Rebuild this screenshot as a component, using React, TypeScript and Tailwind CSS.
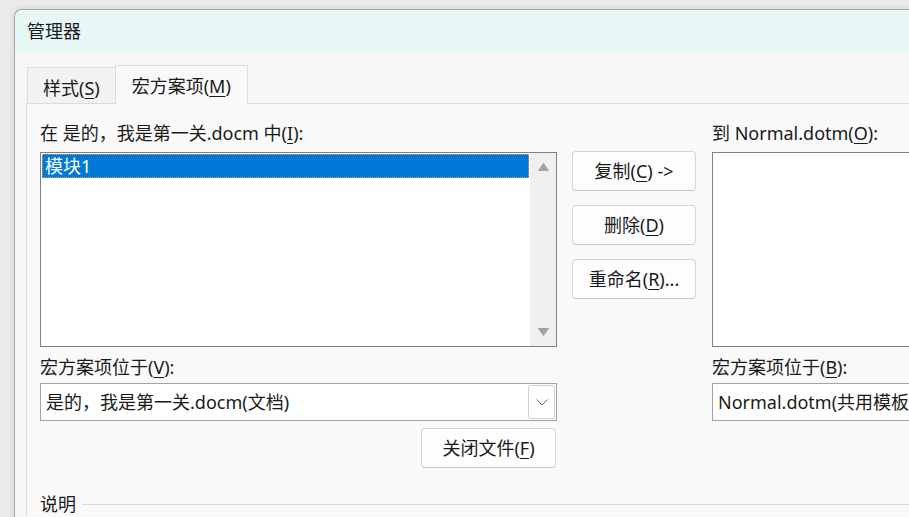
const font = "font-['Noto_Sans','Noto_Sans_CJK_SC',sans-serif]"

function U({ children }: { children: string }) {
  // mnemonic letter
  return <span className="underline underline-offset-[3px] decoration-1">{children}</span>
}

function Button({ children, className = "" }: { children: React.ReactNode; className?: string }) {
  return (
    <div
      className={
        "flex h-[40px] items-center justify-center rounded-[4px] border border-[#d4d4d4] border-b-[#c6c6c6] bg-[#fdfdfd] leading-none " +
        className
      }
    >
      {children}
    </div>
  )
}

function UpArrow() {
  return (
    <svg width="11" height="8" viewBox="0 0 11 8">
      <polygon points="5.5,0.5 10.5,7.5 0.5,7.5" fill="#a3a3a3" stroke="#a3a3a3" strokeLinejoin="round" />
    </svg>
  )
}

function DownArrow() {
  return (
    <svg width="11" height="8" viewBox="0 0 11 8">
      <polygon points="0.5,0.5 10.5,0.5 5.5,7.5" fill="#a3a3a3" stroke="#a3a3a3" strokeLinejoin="round" />
    </svg>
  )
}

function Chevron() {
  return (
    <svg width="12" height="7" viewBox="0 0 12 7">
      <path d="M0.5 0.5 L6 6 L11.5 0.5" fill="none" stroke="#6b6b6b" strokeWidth="1" />
    </svg>
  )
}

export default function App() {
  return (
    <div
      className={
        "h-[517px] w-[909px] overflow-hidden bg-[#ebebeb] pl-[14px] pt-[9px] text-[18px] text-[#1a1a1a] " + font
      }
    >
      <div className="flex h-[600px] w-[1000px] flex-col rounded-tl-[8px] border-l border-t border-[#a6a6a6] bg-[#f7f7f7] shadow-[0_0_6px_rgba(0,0,0,0.12)]">
        {/* title bar */}
        <div className="flex h-[42px] items-center rounded-tl-[8px] bg-[#e6f7f6] pl-[12px] leading-none">管理器</div>

        <div className="pl-[11px] pt-[13px]">
          {/* tabs */}
          <div className="relative z-10 ml-[1px] flex h-[38px] items-end">
            <div className="flex h-[36px] items-center border-l border-r-0 border-t border-[#dcdcdc] bg-[#f2f2f2] px-[15px] pt-[4px] leading-none">
              样式(<U>S</U>)
            </div>
            <div className="-mb-px flex h-[39px] items-center border-l border-r border-t border-[#dcdcdc] bg-[#f9f9f9] px-[16px] pt-[2px] leading-none">
              宏方案项(<U>M</U>)
            </div>
          </div>

          {/* tab panel */}
          <div className="border-l border-t border-[#dcdcdc] bg-[#f9f9f9] pl-[13px] pt-[17px]">
            <div className="flex">
              {/* left column */}
              <div className="flex w-[517px] flex-col">
                <div className="h-[24px] leading-[24px]">
                  在 是的，我是第一关.docm 中(<U>I</U>):
                </div>
                <div className="mt-[7px] flex h-[195px] border border-[#80808a] bg-white">
                  <div className="flex-1 p-px">
                    <div className="flex h-[24px] items-center border border-dotted border-[#f39a3a] bg-[#0078d7] pl-[2px] leading-none text-white">
                      模块1
                    </div>
                  </div>
                  <div className="flex w-[26px] flex-col items-center justify-between bg-[#f0f0f0] py-[10px]">
                    <UpArrow />
                    <DownArrow />
                  </div>
                </div>
                <div className="mt-[8px] h-[24px] leading-[24px]">
                  宏方案项位于(<U>V</U>):
                </div>
                <div className="mt-[4px] flex h-[38px] border border-[#a3a3a3] bg-white p-px">
                  <div className="flex flex-1 items-center pl-[4px] leading-none">是的，我是第一关.docm(文档)</div>
                  <div className="flex w-[27px] items-center justify-center rounded-[3px] border border-[#d0d0d0] bg-white">
                    <Chevron />
                  </div>
                </div>
                <Button className="mr-px mt-[7px] w-[135px] self-end">
                  关闭文件(<U>F</U>)
                </Button>
              </div>

              {/* middle buttons */}
              <div className="ml-[15px] flex w-[124px] flex-col gap-[14px] pt-[30px]">
                <Button>
                  复制(<U>C</U>) -&gt;
                </Button>
                <Button>
                  删除(<U>D</U>)
                </Button>
                <Button>
                  重命名(<U>R</U>)...
                </Button>
              </div>

              {/* right column */}
              <div className="ml-[16px] flex w-[300px] flex-col">
                <div className="h-[24px] leading-[24px]">
                  到 Normal.dotm(<U>O</U>):
                </div>
                <div className="mt-[7px] h-[195px] border border-[#80808a] bg-white" />
                <div className="mt-[8px] h-[24px] leading-[24px]">
                  宏方案项位于(<U>B</U>):
                </div>
                <div className="mt-[4px] flex h-[38px] items-center border border-[#a3a3a3] bg-white pl-[5px] leading-none whitespace-nowrap">
                  Normal.dotm(共用模板)
                </div>
              </div>
            </div>

            {/* group box */}
            <div className="mt-[24px] flex h-[24px] items-center gap-[6px]">
              <span className="leading-[24px]">说明</span>
              <div className="h-px flex-1 bg-[#d8d8d8]" />
            </div>
          </div>
        </div>
      </div>
    </div>
  )
}
